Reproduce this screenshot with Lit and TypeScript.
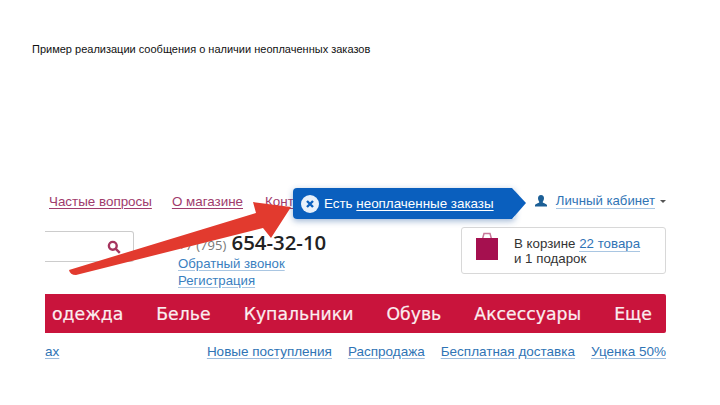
import { LitElement, html, css, svg } from "lit";
import { customElement } from "lit/decorators.js";

@customElement("app-root")
export class AppRoot extends LitElement {
  static styles = css`
    :host { display: block; width: 720px; height: 405px; background: #fff; position: relative; overflow: hidden; font-family: "Liberation Sans", Arial, sans-serif; }
    .caption { padding: 43px 0 0 32px; font-size: 11px; line-height: 12px; color: #111; height: 147px; box-sizing: content-box; }
    .shot { margin-left: 45px; width: 621px; display: flex; flex-direction: column; font-size: 13.4px; }
    .top { display: flex; align-items: center; height: 32px; padding-left: 4px; margin-top: -5px; }
    .plum { color: #a03b6c; text-decoration: underline; text-underline-offset: 2px; text-decoration-thickness: 1px; white-space: nowrap; }
    .top .plum { margin-right: 20px; }
    .top .plum + .plum { margin-right: 22px; }
    .account { margin-left: auto; display: flex; align-items: center; gap: 8px; color: #2f74b5; font-size: 13.2px; }
    .account span { border-bottom: 1px solid #a9c6e2; line-height: 14px; }
    .caret { width: 0; height: 0; border: 3px solid transparent; border-top: 3px solid #555; border-bottom: 0; margin-left: -3px; }
    .mid { display: flex; height: 67px; margin-top: 10px; }
    .search { width: 89px; height: 31px; margin-top: 4px; box-sizing: border-box; border: 1px solid #ccc; border-left: 0; border-radius: 0 3px 3px 0; display: flex; align-items: center; justify-content: flex-end; padding-right: 12px; }
    .contact { margin-left: 44px; display: flex; flex-direction: column; font-size: 13.2px; }
    .phone { font-family: "Open Sans", sans-serif; font-size: 20.4px; font-weight: 600; line-height: 24px; padding-top: 3px; margin-bottom: -1px; color: #222; white-space: nowrap; }
    .phone small { font-size: 13px; font-weight: 400; color: #777; }
    .contact a { color: #3a7fc0; line-height: 16.5px; text-decoration: underline; text-decoration-color: #a9c6e2; text-underline-offset: 2px; }
    .cart { margin-left: auto; width: 205px; height: 47px; box-sizing: border-box; border: 1px solid #d8d8d8; border-radius: 3px; display: flex; align-items: center; gap: 16px; padding-left: 14px; color: #333; line-height: 15px; font-size: 13.3px; }
    .cart svg { align-self: flex-start; margin-top: 4px; }
    .cart a { color: #2f74b5; border-bottom: 1px solid #a9c6e2; }
    .nav { height: 39px; background: #c9143c; border-radius: 0 2px 2px 0; display: flex; align-items: center; justify-content: space-between; padding: 0 14px 0 7px; font-family: "DejaVu Sans", sans-serif; font-size: 17.3px; font-weight: 400; color: #fbeef0; -webkit-text-stroke: 0.2px #fbeef0; }
    .sub { display: flex; align-items: center; height: 36px; font-size: 13.5px; }
    .sub a { color: #2f74b5; text-decoration: underline; text-decoration-color: #9cbcdc; text-underline-offset: 2px; margin-left: 16px; white-space: nowrap; }
    .sub a:first-child { margin: 0 auto 0 0; }
    .sub a:nth-child(2) { margin-left: 0; }
    .arrow { position: absolute; left: 0; top: 0; pointer-events: none; }
    .badge { position: absolute; left: 293px; top: 188px; width: 233px; height: 31px; background: #0a5fbe; clip-path: polygon(0 0, 219px 0, 233px 15px, 219px 31px, 0 31px); border-radius: 4px 0 0 4px; display: flex; align-items: center; gap: 5px; padding-left: 8px; box-sizing: border-box; color: #fff; font-size: 13.4px; white-space: nowrap; }
    .badge u { text-underline-offset: 2px; }
    .badge-shadow { position: absolute; left: 293px; top: 188px; width: 222px; height: 31px; box-shadow: 0 2px 6px rgba(40,90,160,.45); border-radius: 4px; }
  `;

  render() {
    return html`
      <div class="caption">Пример реализации сообщения о наличии неоплаченных заказов</div>
      <div class="shot">
        <div class="top">
          <a class="plum">Частые вопросы</a>
          <a class="plum">О магазине</a>
          <a class="plum">Контакты</a>
          <div class="account">
            <svg width="14" height="14" viewBox="0 0 14 14"><path fill="#1c5f96" d="M7 1c2 0 3 1.500 3 3.300S9 7.500 8.600 8c0 1 3.400 1.500 4.400 3v1.500H1V11c1-1.500 4.400-2 4.400-3C5 7.500 4 6.100 4 4.300S5 1 7 1z"/></svg>
            <span>Личный кабинет</span><i class="caret"></i>
          </div>
        </div>
        <div class="mid">
          <div class="search">
            <svg width="14" height="14" viewBox="0 0 14 14" fill="none" stroke="#a6355f" stroke-width="2.400"><circle cx="5.800" cy="5.800" r="3.900"/><path d="M8.800 8.800 12.800 12.800"/></svg>
          </div>
          <div class="contact">
            <div class="phone"><small>+7 (795)</small> 654-32-10</div>
            <a>Обратный звонок</a>
            <a>Регистрация</a>
          </div>
          <div class="cart">
            <svg width="22" height="28" viewBox="0 0 22 28"><path fill="none" stroke="#c8789a" stroke-width="1.500" d="M6.500 7 8 1.500h6L15.500 7"/><rect y="6" width="22" height="22" fill="#a5104f"/></svg>
            <div>В корзине <a>22 товара</a><br />и 1 подарок</div>
          </div>
        </div>
        <div class="nav">
          <span>одежда</span><span>Белье</span><span>Купальники</span><span>Обувь</span><span>Аксессуары</span><span>Еще</span>
        </div>
        <div class="sub">
          <a>ах</a>
          <a>Новые поступления</a>
          <a>Распродажа</a>
          <a>Бесплатная доставка</a>
          <a>Уценка 50%</a>
        </div>
      </div>
      <div class="badge-shadow"></div>
      <div class="badge">
        <svg width="18" height="18" viewBox="0 0 18 18"><circle cx="9" cy="9" r="9" fill="#e8f0fa"/><path d="M6 6 12 12M12 6 6 12" stroke="#0a5fbe" stroke-width="2.400"/></svg>
        <span>Есть <u>неоплаченные заказы</u></span>
      </div>
      <svg class="arrow" width="720" height="405" viewBox="0 0 720 405">
        ${svg`<path fill="#e23a2e" d="M69 270 256 213 253 202 291 207 271 238 263 228 76 275Q70 275 69 270z"/>`}
      </svg>
    `;
  }
}
